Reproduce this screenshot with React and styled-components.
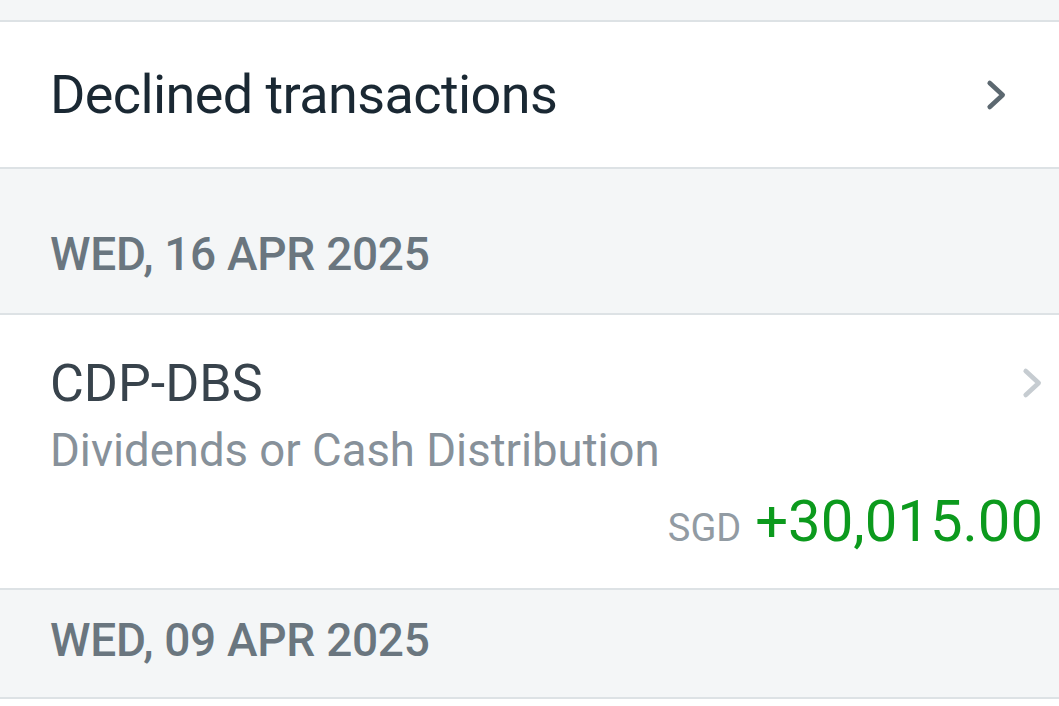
import styled, { createGlobalStyle } from 'styled-components'

const GlobalStyle = createGlobalStyle`
  html, body {
    margin: 0;
    padding: 0;
    background: #ffffff;
    font-family: Roboto, "Liberation Sans", sans-serif;
  }
`

const Chevron = ({ color, size = 32 }) => (
  <svg width={size * 0.7} height={size} viewBox="0 0 21 32" fill="none">
    <polyline
      points="4,4 17,16 4,28"
      stroke={color}
      strokeWidth="4.6"
      strokeLinecap="round"
      strokeLinejoin="round"
    />
  </svg>
)

const App = () => {
  return (
    <Page>
      <GlobalStyle />
      <TopStrip />

      <LinkRow>
        <LinkLabel>Declined transactions</LinkLabel>
        <Chevron color="#5c6870" />
      </LinkRow>

      <DateHeader $tall>
        <DateText>WED, 16 APR 2025</DateText>
      </DateHeader>

      <TxRow>
        <TxTop>
          <TxTitle>CDP-DBS</TxTitle>
          <Chevron color="#c6ccd1" />
        </TxTop>
        <TxSub>Dividends or Cash Distribution</TxSub>
        <AmountLine>
          <Currency>SGD</Currency>
          <Amount>+30,015.00</Amount>
        </AmountLine>
      </TxRow>

      <DateHeader>
        <DateText>WED, 09 APR 2025</DateText>
      </DateHeader>
    </Page>
  )
}

export default App

const Page = styled.div`
  width: 1059px;
  height: 706px;
  overflow: hidden;
  background: #ffffff;
`

const TopStrip = styled.div`
  height: 20px;
  background: #f4f6f7;
  border-bottom: 2px solid #dde2e5;
`

const LinkRow = styled.div`
  height: 145px;
  display: flex;
  align-items: center;
  justify-content: space-between;
  padding: 0 52px 0 50px;
  background: #ffffff;
  border-bottom: 2px solid #dde2e5;
`

const LinkLabel = styled.div`
  font-size: 54px;
  color: #1a2833;
  letter-spacing: -0.6px;
`

const DateHeader = styled.div`
  height: ${(p) => (p.$tall ? '146px' : '109px')};
  display: flex;
  align-items: ${(p) => (p.$tall ? 'flex-end' : 'center')};
  padding: ${(p) => (p.$tall ? '0 50px 36px' : '0 50px 8px')};
  box-sizing: border-box;
  background: #f4f6f7;
  border-bottom: 2px solid #dde2e5;
`

const DateText = styled.div`
  font-size: 46px;
  font-weight: 500;
  line-height: 46px;
  color: #6a767f;
  letter-spacing: -0.3px;
`

const TxRow = styled.div`
  height: 275px;
  box-sizing: border-box;
  display: flex;
  flex-direction: column;
  padding: 38px 16px 0 50px;
  background: #ffffff;
  border-bottom: 2px solid #dde2e5;
`

const TxTop = styled.div`
  display: flex;
  align-items: center;
  justify-content: space-between;
  height: 60px;
`

const TxTitle = styled.div`
  font-size: 52px;
  color: #38434c;
`

const TxSub = styled.div`
  margin-top: 10px;
  font-size: 45.5px;
  line-height: 56px;
  color: #87919a;
`

const AmountLine = styled.div`
  margin-top: 10px;
  display: flex;
  justify-content: flex-end;
  align-items: baseline;
  gap: 14px;
  line-height: 64px;
`

const Currency = styled.span`
  font-size: 38px;
  color: #929ba3;
`

const Amount = styled.span`
  font-size: 58px;
  color: #0c9a1d;
`
